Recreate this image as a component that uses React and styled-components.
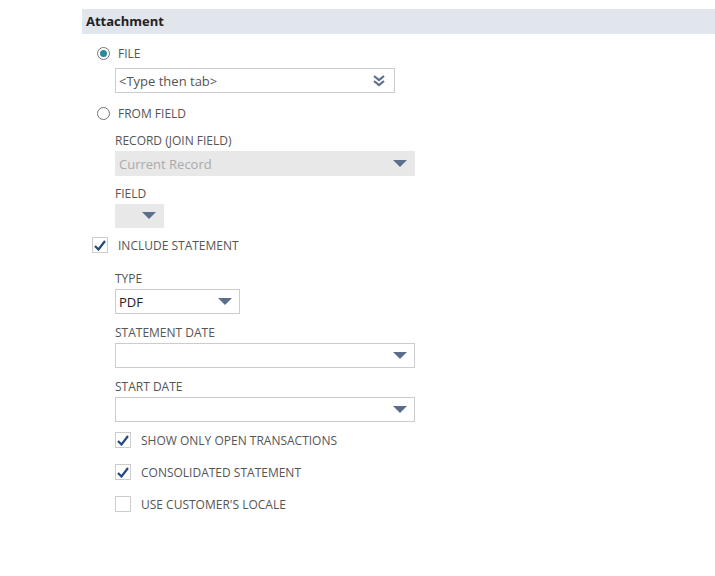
import React from 'react';
import styled, { createGlobalStyle } from 'styled-components';

const Global = createGlobalStyle`
  body { margin: 0; background: #fff; font-family: "Open Sans", sans-serif; }
`;

const Page = styled.div`
  padding: 9px 0 0 82px;
  width: 715px;
  height: 576px;
  box-sizing: border-box;
`;

const Header = styled.div`
  height: 25px;
  background: #e1e5ec;
  font-weight: 700;
  font-size: 13px;
  color: #222;
  padding-left: 4px;
  line-height: 25px;
`;

const Body = styled.div`
  padding-left: 10px;
  display: flex;
  flex-direction: column;
`;

const OptionRow = styled.div`
  display: flex;
  align-items: center;
  gap: ${p => p.$gap || 8}px;
  font-size: 12px;
  color: #555;
  margin-top: ${p => p.$mt || 0}px;
  margin-left: ${p => p.$ml || 0}px;
  height: 16px;
`;

const Radio = styled.span`
  width: 11px;
  height: 11px;
  border-radius: 50%;
  border: 1px solid #777;
  margin-left: 5px;
  display: flex;
  align-items: center;
  justify-content: center;
  background: #fff;
  &::after {
    content: '';
    display: ${p => (p.$on ? 'block' : 'none')};
    width: 7px;
    height: 7px;
    border-radius: 50%;
    background: #2a8a9a;
  }
`;

const Box = styled.span`
  width: 14px;
  height: 14px;
  border: 1px solid #ccc;
  background: #fff;
  display: flex;
  align-items: center;
  justify-content: center;
`;

const Label = styled.div`
  font-size: 12px;
  color: #555;
  margin: ${p => p.$mt || 0}px 0 3px 23px;
  line-height: 14px;
`;

const Select = styled.div`
  box-sizing: border-box;
  width: ${p => p.$w}px;
  height: ${p => p.$h || 25}px;
  margin-left: ${p => p.$ml || 23}px;
  margin-top: ${p => p.$mt || 0}px;
  border: 1px solid ${p => (p.$disabled ? '#e8e8e8' : '#ccc')};
  background: ${p => (p.$disabled ? '#e8e8e8' : '#fff')};
  display: flex;
  align-items: center;
  justify-content: space-between;
  padding: 0 4px 0 3px;
  font-size: 13px;
  color: ${p => (p.$disabled ? '#aaa' : '#222')};
`;

const Arrow = () => (
  <svg width="14" height="8" viewBox="0 0 14 8" style={{ marginRight: 3 }}>
    <path d="M0 0 H14 L7 7 Z" fill="#5b6e8e" />
  </svg>
);

const DoubleArrow = () => (
  <svg width="12" height="12" viewBox="0 0 12 12" style={{ marginRight: 5 }}>
    <path d="M1 1 L6 5 L11 1 M1 6 L6 10 L11 6" stroke="#5b6e8e" strokeWidth="2.2" fill="none" />
  </svg>
);

const Check = () => (
  <svg width="12" height="11" viewBox="0 0 12 11">
    <path d="M1 6 L4.5 9.5 L11 1" stroke="#24487e" strokeWidth="2.2" fill="none" />
  </svg>
);

export default function App() {
  return (
    <Page>
      <Global />
      <Header>Attachment</Header>
      <Body>
        <OptionRow $mt={11}><Radio $on /> FILE</OptionRow>
        <Select $w={280} $ml={0} $mt={7}>
          <span style={{ color: '#555' }}>&lt;Type then tab&gt;</span>
          <DoubleArrow />
        </Select>
        <OptionRow $mt={12}><Radio /> FROM FIELD</OptionRow>
        <Label $mt={13}>RECORD (JOIN FIELD)</Label>
        <Select $w={300} $disabled>
          <span>Current Record</span>
          <Arrow />
        </Select>
        <Label $mt={11}>FIELD</Label>
        <Select $w={49} $h={24} $disabled style={{ justifyContent: 'flex-end' }}>
          <Arrow />
        </Select>
        <OptionRow $mt={9} $gap={10}><Box><Check /></Box> INCLUDE STATEMENT</OptionRow>
        <Label $mt={19}>TYPE</Label>
        <Select $w={125}>
          <span>PDF</span>
          <Arrow />
        </Select>
        <Label $mt={12}>STATEMENT DATE</Label>
        <Select $w={300}><span /><Arrow /></Select>
        <Label $mt={12}>START DATE</Label>
        <Select $w={300}><span /><Arrow /></Select>
        <OptionRow $mt={10} $ml={23} $gap={10}><Box><Check /></Box> SHOW ONLY OPEN TRANSACTIONS</OptionRow>
        <OptionRow $mt={16} $ml={23} $gap={10}><Box><Check /></Box> CONSOLIDATED STATEMENT</OptionRow>
        <OptionRow $mt={16} $ml={23} $gap={10}><Box /> USE CUSTOMER'S LOCALE</OptionRow>
      </Body>
    </Page>
  );
}
